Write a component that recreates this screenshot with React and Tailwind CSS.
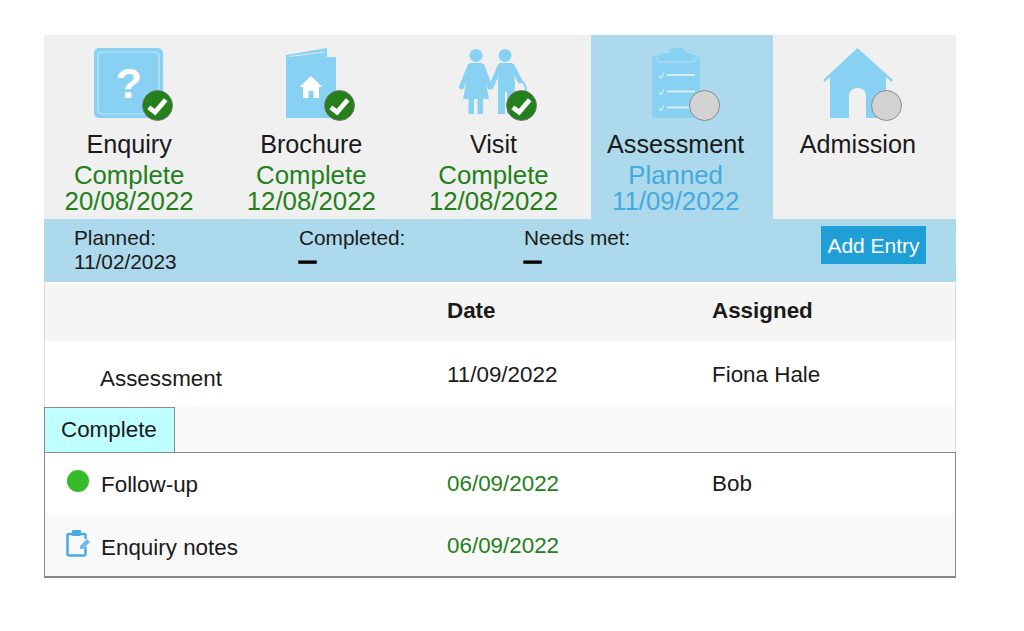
import React from 'react';

const steps = [
  { name: 'Enquiry', status: 'Complete', date: '20/08/2022', icon: EnquiryIcon, done: true },
  { name: 'Brochure', status: 'Complete', date: '12/08/2022', icon: BrochureIcon, done: true },
  { name: 'Visit', status: 'Complete', date: '12/08/2022', icon: VisitIcon, done: true },
  { name: 'Assessment', status: 'Planned', date: '11/09/2022', icon: AssessmentIcon, active: true },
  { name: 'Admission', icon: AdmissionIcon },
];

function EnquiryIcon() {
  return (
    <svg viewBox="0 0 70 70" className="w-[70px] h-[70px]">
      <rect x="0" y="0" width="69" height="70" rx="5" fill="#89d1f3" />
      <rect x="4" y="4" width="61" height="62" rx="4" fill="none" stroke="#c4e8f9" strokeWidth="1.2" />
      <text x="35" y="50" textAnchor="middle" fontSize="43" fontWeight="700" fontFamily="Liberation Sans, sans-serif" fill="#fff">?</text>
    </svg>
  );
}

function BrochureIcon() {
  return (
    <svg viewBox="0 0 70 70" className="w-[70px] h-[70px]">
      <path d="M10 7 51 0V9H60V70H10Z" fill="#89d1f3" />
      <path d="M13 8.500 48 4" stroke="#d8effb" strokeWidth="1" fill="none" />
      <path d="M35 28 46.500 39H43V50H37.500V43H32.500V50H27V39H23.500Z" fill="#fff" />
    </svg>
  );
}

function VisitIcon() {
  return (
    <svg viewBox="0 0 70 70" className="w-[70px] h-[70px]" fill="#89d1f3">
      <circle cx="18" cy="7.500" r="6.500" />
      <circle cx="47" cy="7.500" r="6.500" />
      {/* woman */}
      <path d="M12 15H24L31 51H5Z" />
      <path d="M10.500 51H16V66H10.500ZM19.500 51H25V66H19.500Z" />
      <path d="M12 18 3.500 39M24 18 32 39" stroke="#89d1f3" strokeWidth="5" strokeLinecap="round" fill="none" />
      {/* man */}
      <path d="M41 15H54L57 34 56 66H49V44H47V66H40V34Z" />
      <path d="M42 18 33 39M54 18 62 33" stroke="#89d1f3" strokeWidth="5" strokeLinecap="round" fill="none" />
      <path d="M61 33C66 33 68 38 68 44" stroke="#89d1f3" strokeWidth="2" fill="none" />
    </svg>
  );
}

function AssessmentIcon() {
  return (
    <svg viewBox="0 0 70 70" className="w-[70px] h-[70px]">
      <rect x="11" y="7" width="48" height="63" rx="4" fill="#89d1f3" />
      <path d="M28 5 31 0H42L45 5H50L53 14H18L21 5Z" fill="#89d1f3" />
      <path d="M14 7 18 14H53L57 7" fill="none" stroke="#a8dcf2" strokeWidth="1.500" />
      <g stroke="#d4eefa" fill="none">
        <path d="M26 27H54M26 43.500H54M26 59.500H54" strokeWidth="2" />
        <path d="M18 28 20 30 23 25M18 44.500 20 46.500 23 41.500M18 60.500 20 62.500 23 57.500" strokeWidth="1.200" />
      </g>
    </svg>
  );
}

function AdmissionIcon() {
  return (
    <svg viewBox="0 0 70 70" className="w-[70px] h-[70px]">
      <path
        fillRule="evenodd"
        fill="#89d1f3"
        d="M34.500 0 70 32 68.500 34 63 29V70H43V48C43 43 39.500 40 34.500 40S26 43 26 48V70H7V29L1.500 34 0 32Z"
      />
    </svg>
  );
}

function Badge({ done }) {
  if (!done) {
    return <span className="absolute left-[48px] top-[42px] w-[31px] h-[31px] rounded-full bg-[#d3d3d3] border border-[#8a8a8a]" />;
  }
  return (
    <span className="absolute left-[48px] top-[42px] w-[31px] h-[31px] rounded-full bg-[#23801a] border border-[#777] flex items-center justify-center">
      <svg viewBox="0 0 30 30" className="w-[29px] h-[29px]">
        <path d="M6 17 12.500 22 23.500 9" fill="none" stroke="#fff" strokeWidth="5" strokeLinejoin="miter" />
      </svg>
    </span>
  );
}

function NotesIcon() {
  return (
    <svg viewBox="0 0 24 28" className="w-6 h-7 shrink-0 -mt-1">
      <path d="M6 5H3A1.500 1.500 0 0 0 1.500 6.500V25A1.500 1.500 0 0 0 3 26.500H18A1.500 1.500 0 0 0 19.500 25V18" fill="none" stroke="#4aabe0" strokeWidth="2.500" />
      <path d="M15 5H18A1.500 1.500 0 0 1 19.500 6.500V10" fill="none" stroke="#4aabe0" strokeWidth="2.500" />
      <rect x="6" y="1" width="9" height="6" rx="1" fill="#4aabe0" />
      <path d="M14 17 21 10 24 13 17 20H14Z" fill="#6dbce6" />
    </svg>
  );
}

function SummaryItem({ label, value, dash }) {
  return (
    <div className="w-[225px] text-[20.800px] leading-6 text-[#1a1a1a]">
      <div>{label}</div>
      {dash ? <div className="font-bold text-[17px] text-black [-webkit-text-stroke:1.5px_black]">—</div> : <div>{value}</div>}
    </div>
  );
}

export default function App() {
  return (
    <div className="min-h-[631px] bg-white pt-[35px] px-[44px] font-['Liberation_Sans',Arial,sans-serif] text-[#1a1a1a]">
      <div className="w-[912px]">
        {/* Steps */}
        <div className="flex bg-[#f0f0f0]">
          {steps.map(step => {
            const Icon = step.icon;
            return (
              <div
                key={step.name}
                className={`w-[182.2px] h-[184px] pt-[13px] pr-3 flex flex-col items-center leading-[26px] ${step.active ? 'bg-[#acd9eb]' : ''}`}
              >
                <div className="relative w-[70px] h-[70px]">
                  <Icon />
                  <Badge done={step.done} />
                </div>
                <div className="mt-[13px] text-[25.200px]">{step.name}</div>
                {step.status && (
                  <div className={`mt-[5px] text-center text-[25.800px] ${step.active ? 'text-[#45aade]' : 'text-[#23801a]'}`}>
                    <div>{step.status}</div>
                    <div>{step.date}</div>
                  </div>
                )}
              </div>
            );
          })}
        </div>

        {/* Summary bar */}
        <div className="h-[63px] bg-[#acd9eb] pl-[30px] pr-[30px] pt-[7px] flex items-start">
          <SummaryItem label="Planned:" value="11/02/2023" />
          <SummaryItem label="Completed:" dash />
          <SummaryItem label="Needs met:" dash />
          <button className="ml-auto h-[38px] w-[105px] bg-[#209fd6] text-white text-[21px] leading-none">Add Entry</button>
        </div>

        {/* Table */}
        <div className="border-x border-[#ddd] text-[22.400px] leading-[33px]">
          <div className="mt-px h-[58px] pb-1 bg-[#f5f5f5] grid grid-cols-[402px_265px_1fr] items-center font-bold">
            <div />
            <div>Date</div>
            <div>Assigned</div>
          </div>
          <div className="h-[66px] grid grid-cols-[402px_265px_1fr] pt-[17px]">
            <div className="pl-[55px] pt-[4px]">Assessment</div>
            <div>11/09/2022</div>
            <div>Fiona Hale</div>
          </div>
        </div>

        <div className="h-[45px] bg-[#f9f9f9] border-r border-[#ddd] flex items-end">
          <div className="h-[45px] w-[131px] pl-[16px] bg-[#c0ffff] border border-b-0 border-[#888] flex items-center text-[22.400px]">Complete</div>
        </div>

        <div className="border border-b-2 border-[#888] text-[22.400px] leading-[33px]">
          <div className="h-[61px] grid grid-cols-[402px_265px_1fr] items-center">
            <div className="pl-[22px] flex items-center gap-3">
              <span className="w-[22px] h-[22px] rounded-full bg-[#36bc2a] -mt-[6px]" />
              <span className="pt-[2px]">Follow-up</span>
            </div>
            <div className="text-[#23801a]">06/09/2022</div>
            <div>Bob</div>
          </div>
          <div className="h-[62px] bg-[#f9f9f9] grid grid-cols-[402px_265px_1fr] items-center">
            <div className="pl-[21px] flex items-center gap-[11px]">
              <NotesIcon />
              <span className="pt-1">Enquiry notes</span>
            </div>
            <div className="text-[#23801a]">06/09/2022</div>
            <div />
          </div>
        </div>
      </div>
    </div>
  );
}
